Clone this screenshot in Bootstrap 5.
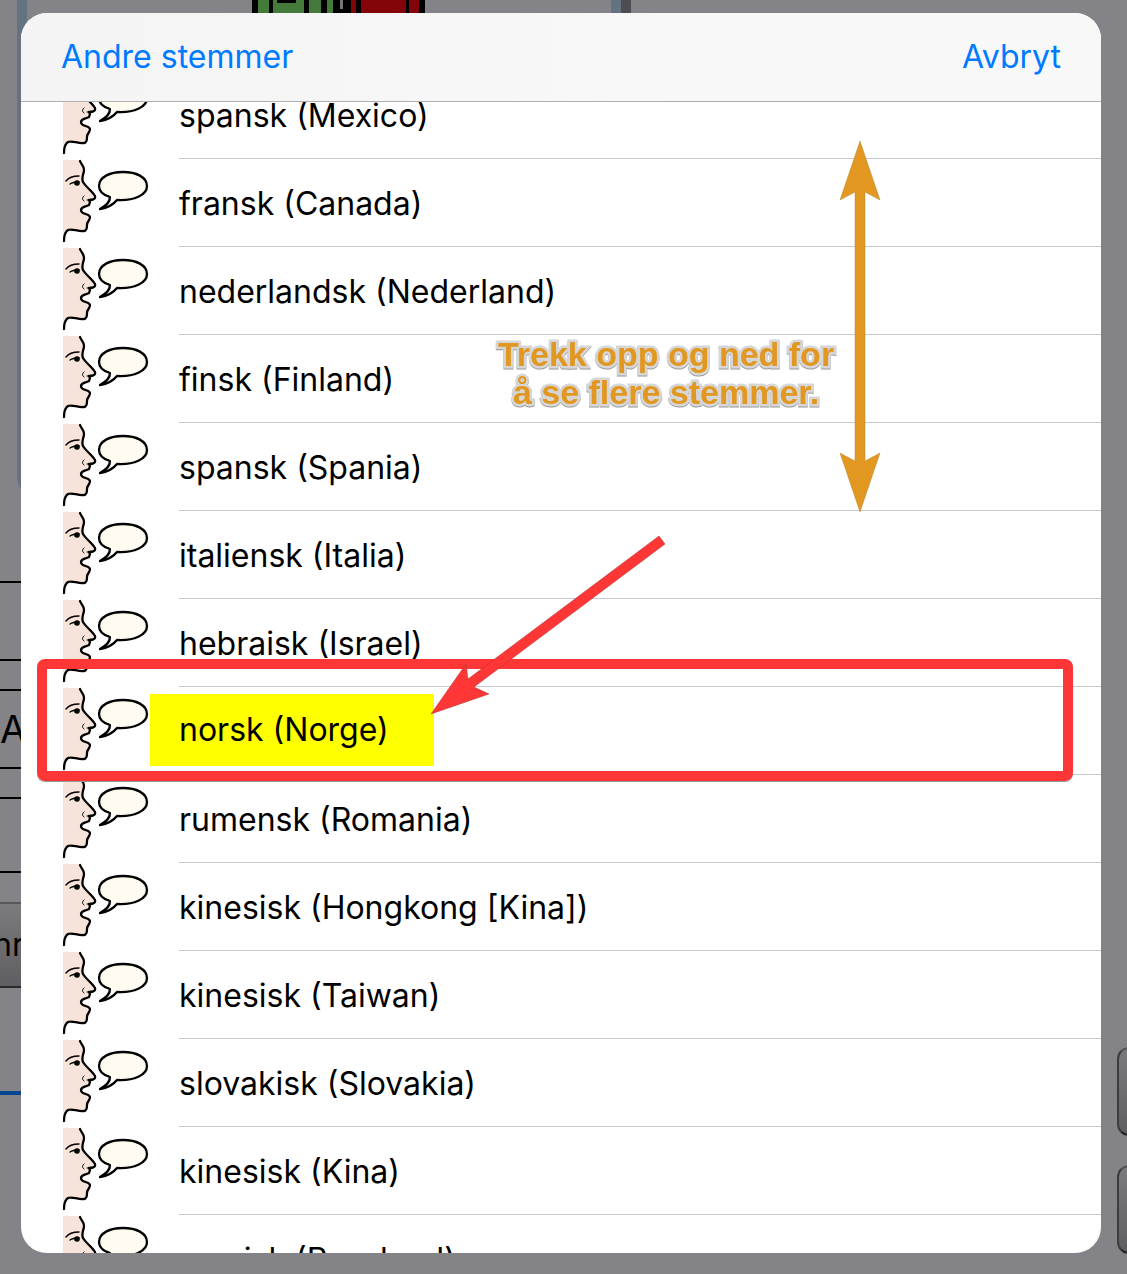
<!DOCTYPE html>
<html lang="nb">
<head>
<meta charset="utf-8">
<meta name="viewport" content="width=device-width, initial-scale=1">
<title>Andre stemmer</title>
<link href="https://cdn.jsdelivr.net/npm/bootstrap@5.3.0/dist/css/bootstrap.min.css" rel="stylesheet">
<style>
body { background: #848488; font-family: Inter, "Liberation Sans", sans-serif; font-size: 32px; color: #000; }
.stage { height: 100vh; padding: 13px 26px 21px 21px; }

/* dimmed page behind the sheet */
.backdrop-page { z-index: 0; }
.board-frame { position: absolute; left: 17px; top: -40px; width: 604px; height: 540px; border: 10px solid #65727f; border-radius: 24px; }
.board-edge { position: absolute; left: 621px; top: 0; width: 10px; height: 40px; background: #4d4d52; }
.board-art { position: absolute; left: 250px; top: 0; }
.left-strip { position: absolute; left: 0; top: 581px; width: 40px; }
.line-box { border: solid #000; border-width: 2px 0; height: 80px; line-height: 76px; }
.line-box + .line-box { margin-top: 28px; }
.line-box.field-a { font-size: 38px; }
.line-box.lower { height: 76px; }
.grey-btn { background: linear-gradient(#7b7b7d, #5f5f63); border: 2px solid #58585b; border-bottom-color: #2a2a2d; color: #000; }
.strip-btn { margin-top: 29px; height: 86px; border-width: 2px 0; line-height: 82px; overflow: hidden; direction: rtl; width: 24px; }
.blue-rule { height: 4px; margin-top: 103px; background: #05458f; }
.right-strip { position: absolute; left: calc(100% - 10px); top: 1047px; width: 90px; gap: 29px; }
.right-strip .grey-btn { height: 89px; border-radius: 12px; border-color: #505053 #2a2a2d #202022 #3c3c40; }

/* sheet */
.sheet { z-index: 1; height: 100%; border-radius: 26px; background: #fff; }
.sheet-head { height: 89px; padding: 0 40px; border-bottom: 1px solid #b0b0b2; background: linear-gradient(90deg, #f4f4f4, #f8f8f8 60%); z-index: 2; }
.sheet-head .btn { color: #007aff; font-size: 32px; line-height: 40px; border: 0; }
.voices { margin-top: -31px; }
.voice { height: 88px; padding-left: 42px; border: 0; background: none; color: #000; text-align: left; }
.voice-icon { width: 88px; height: 88px; margin-right: 28px; flex: none; }
.voice-name { border-bottom: 1px solid #c8c7cc; padding-top: 2px; }
.hilite { background: #ff0; line-height: 72px; margin: -4px 0 0 -29px; padding: 0 45px 0 29px; }

/* annotations */
.pick-frame { position: absolute; z-index: 3; left: 16px; right: 28px; top: -28px; height: 122px; border: 10px solid #ff3636; border-radius: 8px; box-shadow: 0 1px 0 #999; pointer-events: none; }
.pick-arrow { position: absolute; z-index: 4; left: 404px; top: 520px; pointer-events: none; }
.drag-arrow { position: absolute; z-index: 4; left: 818px; top: 127px; pointer-events: none; }
.drag-note { position: absolute; z-index: 4; left: 465px; top: 322px; width: 360px; text-align: center; font: bold 34px/38px "Liberation Sans", Arial, sans-serif; color: #e19720; -webkit-text-stroke: 5px #d6d6d6; stroke-linejoin: round; paint-order: stroke fill; filter: drop-shadow(0 1px 0 #999); }
</style>
<script src="https://cdn.jsdelivr.net/npm/bootstrap@5.3.0/dist/js/bootstrap.bundle.min.js"></script>
</head>
<body>
<svg width="0" height="0" class="position-absolute" aria-hidden="true">
  <symbol id="speak" viewBox="0 0 88 88">
    <path fill="#f6e4da" d="M0 1H17C18 5 21 7 21 11C21 15 18 18 20 23C23 28 29 32 32 37Q33 41 26 41L27 46C23 48 18 48 18 52C18 57 26 54 27 59C27 62 24 62 24 66C24 70 23 72 21 72C15 73 9 69 5 71C2 73 1 78 1 82H0Z"/>
    <g fill="none" stroke="#000" stroke-linecap="round" stroke-linejoin="round">
      <path stroke-width="2.3" d="M17 2C18 5 21 7 21 11C21 15 18 18 20 23C23 28 29 32 32 37Q33 41 26 41L27 43L26 46C22 48 18 48 18 51C18 56 26 54 27 58C27 62 24 62 24 66C24 70 23 72 21 72C15 73 9 69 5 71C2 73 1 78 1 82"/>
      <path stroke-width="1.4" d="M3 22C6 18 10 17 16 17M7 25C10 23 13 23 16 23"/>
      <path stroke-width="1" d="M21 37C19 38 19 41 21 42M24 41L27 41"/>
      <path fill="#fffbf1" stroke-width="2.3" d="M60 13C73 13 84 18 84 27C84 36 71 42 54 41C50 46 44 49 37 50C44 46 47 43 47 38C40 36 36 32 36 27C36 18 47 13 60 13Z"/>
    </g>
    <circle cx="14" cy="24" r="2.8"/>
  </symbol>
</svg>

<div class="stage position-relative overflow-hidden">
  <div class="backdrop-page position-absolute top-0 start-0 w-100 h-100 overflow-hidden" aria-hidden="true">
    <div class="board-frame"></div>
    <div class="board-edge"></div>
    <svg class="board-art" width="178" height="20">
      <path d="M2 0H175V20H2Z"/>
      <path fill="#457b3a" d="M8 0H19V20H8ZM23 0H54V20H23ZM59 0H71V20H59ZM77 0H83V20H77Z"/>
      <path d="M27 0H46V3H27Z"/><path fill="#777" d="M90 0H93V9H90Z"/>
      <path fill="#840509" d="M101 0H106V20H101ZM111 0H156V20H111ZM159 0H169V20H159Z"/>
    </svg>
    <div class="left-strip">
      <div class="line-box"></div>
      <div class="line-box field-a">A</div>
      <div class="line-box lower"></div>
      <div class="grey-btn strip-btn">nr</div>
      <div class="blue-rule"></div>
    </div>
    <div class="right-strip d-flex flex-column">
      <div class="grey-btn"></div>
      <div class="grey-btn"></div>
    </div>
  </div>

  <main class="sheet position-relative overflow-hidden d-flex flex-column">
    <header class="sheet-head position-relative d-flex align-items-center justify-content-between flex-shrink-0">
      <button type="button" class="btn p-0">Andre stemmer</button>
      <button type="button" class="btn p-0">Avbryt</button>
    </header>

    <div class="voices d-flex flex-column flex-shrink-0">
      <button type="button" class="voice d-flex pe-0 py-0"><svg class="voice-icon"><use href="#speak"/></svg><span class="voice-name flex-grow-1 h-100 d-flex align-items-center">spansk (Mexico)</span></button>
      <button type="button" class="voice d-flex pe-0 py-0"><svg class="voice-icon"><use href="#speak"/></svg><span class="voice-name flex-grow-1 h-100 d-flex align-items-center">fransk (Canada)</span></button>
      <button type="button" class="voice d-flex pe-0 py-0"><svg class="voice-icon"><use href="#speak"/></svg><span class="voice-name flex-grow-1 h-100 d-flex align-items-center">nederlandsk (Nederland)</span></button>
      <button type="button" class="voice d-flex pe-0 py-0"><svg class="voice-icon"><use href="#speak"/></svg><span class="voice-name flex-grow-1 h-100 d-flex align-items-center">finsk (Finland)</span></button>
      <button type="button" class="voice d-flex pe-0 py-0"><svg class="voice-icon"><use href="#speak"/></svg><span class="voice-name flex-grow-1 h-100 d-flex align-items-center">spansk (Spania)</span></button>
      <button type="button" class="voice d-flex pe-0 py-0"><svg class="voice-icon"><use href="#speak"/></svg><span class="voice-name flex-grow-1 h-100 d-flex align-items-center">italiensk (Italia)</span></button>
      <button type="button" class="voice d-flex pe-0 py-0"><svg class="voice-icon"><use href="#speak"/></svg><span class="voice-name flex-grow-1 h-100 d-flex align-items-center">hebraisk (Israel)</span></button>
      <button type="button" class="voice d-flex pe-0 py-0 position-relative"><svg class="voice-icon"><use href="#speak"/></svg><span class="voice-name flex-grow-1 h-100 d-flex align-items-center"><span class="hilite">norsk (Norge)</span></span><span class="pick-frame"></span></button>
      <button type="button" class="voice d-flex pe-0 py-0"><svg class="voice-icon"><use href="#speak"/></svg><span class="voice-name flex-grow-1 h-100 d-flex align-items-center">rumensk (Romania)</span></button>
      <button type="button" class="voice d-flex pe-0 py-0"><svg class="voice-icon"><use href="#speak"/></svg><span class="voice-name flex-grow-1 h-100 d-flex align-items-center">kinesisk (Hongkong [Kina])</span></button>
      <button type="button" class="voice d-flex pe-0 py-0"><svg class="voice-icon"><use href="#speak"/></svg><span class="voice-name flex-grow-1 h-100 d-flex align-items-center">kinesisk (Taiwan)</span></button>
      <button type="button" class="voice d-flex pe-0 py-0"><svg class="voice-icon"><use href="#speak"/></svg><span class="voice-name flex-grow-1 h-100 d-flex align-items-center">slovakisk (Slovakia)</span></button>
      <button type="button" class="voice d-flex pe-0 py-0"><svg class="voice-icon"><use href="#speak"/></svg><span class="voice-name flex-grow-1 h-100 d-flex align-items-center">kinesisk (Kina)</span></button>
      <button type="button" class="voice d-flex pe-0 py-0"><svg class="voice-icon"><use href="#speak"/></svg><span class="voice-name flex-grow-1 h-100 d-flex align-items-center">russisk (Russland)</span></button>
    </div>

    <div class="drag-note">Trekk opp og ned for<br>å se flere stemmer.</div>
    <svg class="drag-arrow" width="42" height="374" viewBox="0 0 42 374">
      <path fill="#e19720" stroke="#b98a3c" stroke-width=".5" d="M21 1L41 60L26 52V321L41 313L21 372L1 313L16 321V52L1 60Z"/>
    </svg>
    <svg class="pick-arrow" width="242" height="184" viewBox="0 0 242 184">
      <path fill="#ff3636" stroke="#a33" stroke-width=".5" d="M234 3L240 11L49 154L64 161L6 181L41 131L43 146Z"/>
    </svg>
  </main>
</div>
</body>
</html>
